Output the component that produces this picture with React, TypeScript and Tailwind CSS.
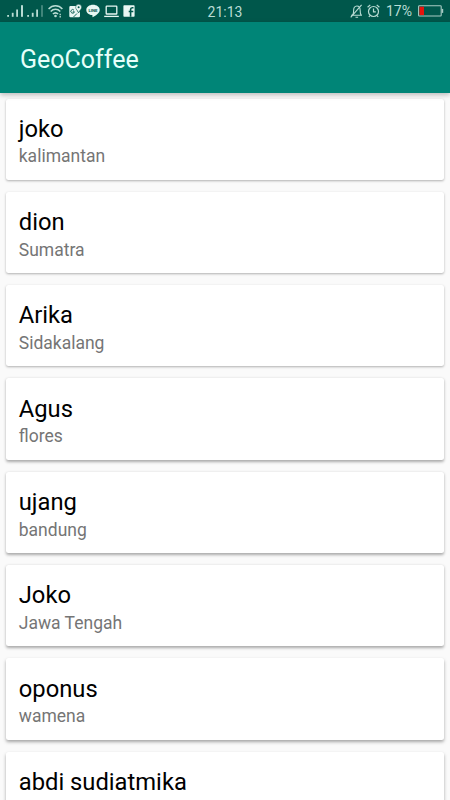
type Place = {
  id: number;
  name: string;
  region?: string;
  shadow: string;
};

// the cast shadow gets longer towards the bottom of the list
const SHADOW = {
  near: "shadow-[0_1px_2.5px_rgba(0,0,0,0.3)]",
  mid: "shadow-[0_1.5px_3px_rgba(0,0,0,0.32)]",
  far: "shadow-[0_2px_3.5px_rgba(0,0,0,0.34)]",
};

const PLACES: Place[] = [
  { id: 1, name: "joko", region: "kalimantan", shadow: SHADOW.near },
  { id: 2, name: "dion", region: "Sumatra", shadow: SHADOW.near },
  { id: 3, name: "Arika", region: "Sidakalang", shadow: SHADOW.near },
  { id: 4, name: "Agus", region: "flores", shadow: SHADOW.mid },
  { id: 5, name: "ujang", region: "bandung", shadow: SHADOW.mid },
  { id: 6, name: "Joko", region: "Jawa Tengah", shadow: SHADOW.mid },
  { id: 7, name: "oponus", region: "wamena", shadow: SHADOW.far },
  { id: 8, name: "abdi sudiatmika", shadow: SHADOW.far },
];

function SignalIcon({ weak = false }: { weak?: boolean }) {
  return (
    <svg width="17" height="14" viewBox="0 0 17 14" fill="currentColor">
      <rect x="0.2" y="11" width="1.8" height="1.8" />
      <rect x="4.8" y="8.8" width="1.8" height="4" />
      <rect x="9.2" y="5.5" width="1.8" height="7.3" />
      <rect x="14" y="1.2" width="2" height="11.6" opacity={weak ? 0.35 : 1} />
    </svg>
  );
}

function WifiIcon() {
  return (
    <svg width="15" height="14" viewBox="0 0 15 14" fill="none" stroke="currentColor" strokeWidth="1.5">
      <path d="M0.6 5C4.5 0.8 10.5 0.8 14.4 5" />
      <path d="M2.7 7.5C5.5 4.6 9.5 4.6 12.3 7.5" />
      <path d="M4.9 10C6.4 8.5 8.6 8.5 10.1 10" />
      <circle cx="7.5" cy="12" r="1.3" fill="currentColor" stroke="none" />
      <path d="M12.2 9.7v1.6M12.2 12v1.4" strokeWidth="1.3" />
    </svg>
  );
}

function MapsIcon() {
  return (
    <svg width="13" height="14" viewBox="0 0 13 14">
      <path
        d="M1.5 2h6c-.7 2.8.5 4.8 2 7l1.5-1.8V12a1.2 1.2 0 0 1-1.2 1.2H1.5A1.2 1.2 0 0 1 .3 12V3.2A1.2 1.2 0 0 1 1.5 2Z"
        fill="currentColor"
      />
      <path d="M5 6.2A1.8 1.8 0 1 0 5.4 7.8H3.8M4.5 13l3.5-3.5" fill="none" stroke="#00574b" strokeWidth="0.9" />
      <path
        d="M9.6.3a3 3 0 0 0-3 3c0 2.1 2.3 3.1 3 5.7.7-2.6 3-3.6 3-5.7a3 3 0 0 0-3-3Z"
        fill="currentColor"
        stroke="#00574b"
        strokeWidth="0.5"
      />
      <circle cx="9.6" cy="3.3" r="1" fill="#00574b" />
    </svg>
  );
}

function LineIcon() {
  return (
    <svg width="14" height="14" viewBox="0 0 14 14">
      <path
        d="M7 .7C3.3.7.3 2.9.3 5.9c0 2.7 2.4 4.7 5.6 5.2.5.1.7.3.6.9l-.1 1.3C9.5 11.7 13.7 9.2 13.7 5.9 13.7 2.9 10.7.7 7 .7Z"
        fill="currentColor"
      />
      <text x="7" y="7.5" textAnchor="middle" fontSize="4.3" fontWeight="700" fill="#00574b">
        LINE
      </text>
    </svg>
  );
}

function LaptopIcon() {
  return (
    <svg width="15" height="14" viewBox="0 0 15 14" fill="none" stroke="currentColor" strokeWidth="1.3">
      <rect x="2.2" y="2.2" width="10.6" height="7.8" rx="0.6" />
      <path d="M0.2 12.4h14.6" />
    </svg>
  );
}

function FacebookIcon() {
  return (
    <svg width="12" height="14" viewBox="0 0 12 14">
      <rect x="0.4" y="1.3" width="11.2" height="11.4" rx="0.8" fill="currentColor" />
      <path
        d="M7.6 12.7V5.4c0-1.2.6-1.7 1.6-1.7h1.3M5.7 7.5h4.6"
        fill="none"
        stroke="#00574b"
        strokeWidth="1.6"
      />
    </svg>
  );
}

function MutedBellIcon() {
  return (
    <svg width="13" height="14" viewBox="0 0 13 14" fill="none" stroke="currentColor" strokeWidth="1.1">
      <path d="M1 11.3h11M2.6 11.1c1-1 1-2.4 1-4.4C3.6 4 4.6 2 6.9 2s3.3 2 3.3 4.7c0 2 0 3.4 1 4.4M5.5 13.2h2.6" />
      <path d="M.7 13.3 11.6.9" />
    </svg>
  );
}

function AlarmIcon() {
  return (
    <svg width="13" height="14" viewBox="0 0 13 14" fill="none" stroke="currentColor" strokeWidth="1.2">
      <circle cx="6.5" cy="7.5" r="5" />
      <path d="M6.5 4.6v3.2h2.3M.6 3.3 3.3.9M12.4 3.3 9.7.9M2.9 11.5l-1 1.5M10.1 11.5l1 1.5" />
    </svg>
  );
}

function BatteryIcon() {
  return (
    <svg width="26" height="12" viewBox="0 0 26 12">
      <rect x="0.6" y="0.8" width="22.6" height="10.2" rx="0.8" fill="none" stroke="#a8cbc4" strokeWidth="1.1" />
      <rect x="1.5" y="1.7" width="4.5" height="8.4" fill="#e5130c" />
      <rect x="23.7" y="3.9" width="1.5" height="4" fill="#a8cbc4" />
    </svg>
  );
}

function StatusBar() {
  return (
    <div className="grid h-[22px] shrink-0 grid-cols-[1fr_auto_1fr] items-center bg-[#00574b] text-[#b9dcd4]">
      <div className="flex items-center pl-[7px]">
        <SignalIcon />
        <span className="ml-[3px]">
          <SignalIcon weak />
        </span>
        <span className="ml-[4px]">
          <WifiIcon />
        </span>
        <span className="ml-[6px] flex items-center gap-[4px] text-[#e8f7f3]">
          <MapsIcon />
          <LineIcon />
          <LaptopIcon />
          <FacebookIcon />
        </span>
      </div>
      <span className="pt-[2px] text-[14px] leading-[20px]">21:13</span>
      <div className="flex items-center justify-end pr-[6px]">
        <MutedBellIcon />
        <span className="ml-[4px]">
          <AlarmIcon />
        </span>
        <span className="ml-[6px] mr-[6px] text-[14px] leading-[20px]">17%</span>
        <BatteryIcon />
      </div>
    </div>
  );
}

function PlaceCard({ place }: { place: Place }) {
  return (
    <li className={`h-[81.3px] shrink-0 rounded-[2.5px] bg-white px-[12.5px] pt-[16.3px] ${place.shadow}`}>
      <h2 className="text-[23.75px] leading-[29px] text-black">{place.name}</h2>
      {place.region && (
        <p className="mt-[2.7px] text-[17.5px] leading-[21px] text-[#757575]">{place.region}</p>
      )}
    </li>
  );
}

export default function App() {
  return (
    <div className="flex h-[800px] w-[450px] flex-col overflow-hidden bg-[#fafafa] font-[Roboto,sans-serif]">
      <StatusBar />
      <header className="relative z-10 flex h-[70.5px] shrink-0 items-center bg-[#008577] px-5 shadow-[0_2px_5px_rgba(0,0,0,0.25)]">
        <h1 className="pt-[5px] text-[25px] leading-[30px] text-[#e6fffa]">GeoCoffee</h1>
      </header>
      <ul className="flex min-h-0 flex-1 flex-col gap-[12px] overflow-hidden px-[6.25px] pt-[6px]">
        {PLACES.map((place) => (
          <PlaceCard key={place.id} place={place} />
        ))}
      </ul>
    </div>
  );
}
